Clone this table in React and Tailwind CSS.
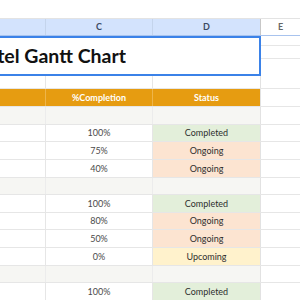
import React from "react";

const rows = [
  { type: "gray", h: 18 },
  { type: "data", h: 17, pct: "100%", status: "Completed" },
  { type: "data", h: 18, pct: "75%", status: "Ongoing" },
  { type: "data", h: 18, pct: "40%", status: "Ongoing" },
  { type: "gray", h: 17 },
  { type: "data", h: 18, pct: "100%", status: "Completed" },
  { type: "data", h: 17, pct: "80%", status: "Ongoing" },
  { type: "data", h: 18, pct: "50%", status: "Ongoing" },
  { type: "data", h: 18, pct: "0%", status: "Upcoming" },
  { type: "gray", h: 17 },
  { type: "data", h: 18, pct: "100%", status: "Completed" },
];

const statusBg = {
  Completed: "bg-[#e3efda]",
  Ongoing: "bg-[#fce4d1]",
  Upcoming: "bg-[#fff2cc]",
};

function Row({ r }) {
  const style = { height: r.h };
  if (r.type === "gray") {
    return (
      <div className="flex border-b border-[#e6e6e6]" style={style}>
        <div className="w-[46px] shrink-0 bg-[#f6f6f3] border-r border-[#ececec]" />
        <div className="w-[107px] shrink-0 bg-[#f6f6f3] border-r border-[#ececec]" />
        <div className="w-[108px] shrink-0 bg-[#f6f6f3] border-r border-[#e2e2e2]" />
        <div className="flex-1 bg-white" />
      </div>
    );
  }
  return (
    <div className="flex border-b border-[#e6e6e6]" style={style}>
      <div className="w-[46px] shrink-0 border-r border-[#e6e6e6]" />
      <div className="w-[107px] shrink-0 border-r border-[#e6e6e6] flex items-center justify-center text-[9px] text-[#4a4a4a]">
        {r.pct}
      </div>
      <div
        className={`w-[108px] shrink-0 border-r border-[#e2e2e2] flex items-center justify-center text-[9px] text-[#2e2e2e] ${statusBg[r.status]}`}
      >
        {r.status}
      </div>
      <div className="flex-1 bg-white" />
    </div>
  );
}

export default function App() {
  return (
    <div
      className="w-[300px] h-[300px] overflow-hidden bg-white relative"
      style={{ fontFamily: "Lato, 'Open Sans', sans-serif" }}
    >
      {/* top strip */}
      <div className="h-[19px] bg-white border-b border-[#e3e3e3]" />
      {/* column headers */}
      <div className="flex h-[17px] border-b border-[#a8c3ee] text-[9px] font-bold">
        <div className="w-[46px] shrink-0 bg-[#d3e3fd] border-r border-[#c4d4ec]" />
        <div className="w-[107px] shrink-0 bg-[#d3e3fd] border-r border-[#c4d4ec] flex items-center justify-center text-[#3b4a63]">
          C
        </div>
        <div className="w-[108px] shrink-0 bg-[#d3e3fd] border-r border-[#c7c7c7] flex items-center justify-center text-[#3b4a63]">
          D
        </div>
        <div className="flex-1 bg-white flex items-center justify-center text-[#666]">
          E
        </div>
      </div>
      {/* title row */}
      <div className="flex h-[40px]">
        <div className="w-[261px] shrink-0 border-2 border-l-0 border-[#3b82e8] flex items-center overflow-hidden">
          <div className="w-[126px] shrink-0 flex justify-end overflow-hidden whitespace-nowrap">
            <span className="text-[19.5px] font-bold text-[#111] leading-none">
              Hotel Gantt Chart
            </span>
          </div>
        </div>
        <div className="flex-1 flex flex-col">
          <div className="h-[10px] border-b border-[#e6e6e6]" />
          <div className="h-[13px] border-b border-[#e6e6e6]" />
          <div className="flex-1" />
        </div>
      </div>
      {/* empty row */}
      <div className="flex h-[13px] border-b border-[#e6e6e6]">
        <div className="w-[46px] shrink-0 border-r border-[#e6e6e6]" />
        <div className="w-[107px] shrink-0 border-r border-[#e6e6e6]" />
        <div className="w-[108px] shrink-0 border-r border-[#e2e2e2]" />
        <div className="flex-1" />
      </div>
      {/* orange header */}
      <div className="flex h-[18px] border-b border-[#e6e6e6] text-[9px] font-bold text-white">
        <div className="w-[46px] shrink-0 bg-[#e69c11] border-r border-[#eeb54a]" />
        <div className="w-[107px] shrink-0 bg-[#e69c11] border-r border-[#eeb54a] flex items-center justify-center">
          %Completion
        </div>
        <div className="w-[108px] shrink-0 bg-[#e69c11] border-r border-[#e2e2e2] flex items-center justify-center">
          Status
        </div>
        <div className="flex-1 bg-white" />
      </div>
      {rows.map((r, i) => (
        <Row key={i} r={r} />
      ))}
    </div>
  );
}
